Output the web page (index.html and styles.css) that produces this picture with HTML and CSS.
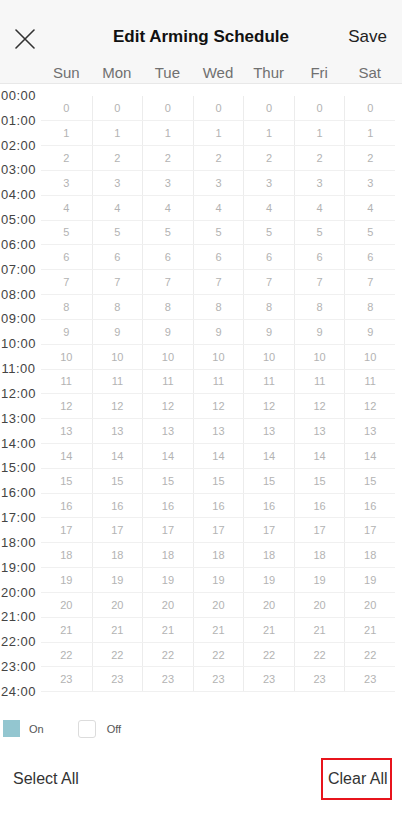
FILE: index.html
```html
<!DOCTYPE html>
<html lang="en">
<head>
<meta charset="utf-8">
<title>Edit Arming Schedule</title>
<link rel="stylesheet" href="styles.css">
</head>
<body>
<header class="header">
  <div class="titlebar">
    <div class="bar-left">
      <svg class="close-icon" width="20" height="20" viewBox="0 0 20 20"><path d="M1 1 L19 19 M19 1 L1 19" stroke="#333" stroke-width="1.6" fill="none" stroke-linecap="round"/></svg>
    </div>
    <h1 class="title">Edit Arming Schedule</h1>
    <div class="bar-right"><span class="save">Save</span></div>
  </div>
  <div class="days">
    <span>Sun</span><span>Mon</span><span>Tue</span><span>Wed</span><span>Thur</span><span>Fri</span><span>Sat</span>
  </div>
</header>
<main class="schedule">
  <div class="times">
    <span>00:00</span><span>01:00</span><span>02:00</span><span>03:00</span><span>04:00</span>
    <span>05:00</span><span>06:00</span><span>07:00</span><span>08:00</span><span>09:00</span>
    <span>10:00</span><span>11:00</span><span>12:00</span><span>13:00</span><span>14:00</span>
    <span>15:00</span><span>16:00</span><span>17:00</span><span>18:00</span><span>19:00</span>
    <span>20:00</span><span>21:00</span><span>22:00</span><span>23:00</span><span>24:00</span>
  </div>
  <div class="grid">
    <div class="row"><span>0</span><span>0</span><span>0</span><span>0</span><span>0</span><span>0</span><span>0</span></div>
    <div class="row"><span>1</span><span>1</span><span>1</span><span>1</span><span>1</span><span>1</span><span>1</span></div>
    <div class="row"><span>2</span><span>2</span><span>2</span><span>2</span><span>2</span><span>2</span><span>2</span></div>
    <div class="row"><span>3</span><span>3</span><span>3</span><span>3</span><span>3</span><span>3</span><span>3</span></div>
    <div class="row"><span>4</span><span>4</span><span>4</span><span>4</span><span>4</span><span>4</span><span>4</span></div>
    <div class="row"><span>5</span><span>5</span><span>5</span><span>5</span><span>5</span><span>5</span><span>5</span></div>
    <div class="row"><span>6</span><span>6</span><span>6</span><span>6</span><span>6</span><span>6</span><span>6</span></div>
    <div class="row"><span>7</span><span>7</span><span>7</span><span>7</span><span>7</span><span>7</span><span>7</span></div>
    <div class="row"><span>8</span><span>8</span><span>8</span><span>8</span><span>8</span><span>8</span><span>8</span></div>
    <div class="row"><span>9</span><span>9</span><span>9</span><span>9</span><span>9</span><span>9</span><span>9</span></div>
    <div class="row"><span>10</span><span>10</span><span>10</span><span>10</span><span>10</span><span>10</span><span>10</span></div>
    <div class="row"><span>11</span><span>11</span><span>11</span><span>11</span><span>11</span><span>11</span><span>11</span></div>
    <div class="row"><span>12</span><span>12</span><span>12</span><span>12</span><span>12</span><span>12</span><span>12</span></div>
    <div class="row"><span>13</span><span>13</span><span>13</span><span>13</span><span>13</span><span>13</span><span>13</span></div>
    <div class="row"><span>14</span><span>14</span><span>14</span><span>14</span><span>14</span><span>14</span><span>14</span></div>
    <div class="row"><span>15</span><span>15</span><span>15</span><span>15</span><span>15</span><span>15</span><span>15</span></div>
    <div class="row"><span>16</span><span>16</span><span>16</span><span>16</span><span>16</span><span>16</span><span>16</span></div>
    <div class="row"><span>17</span><span>17</span><span>17</span><span>17</span><span>17</span><span>17</span><span>17</span></div>
    <div class="row"><span>18</span><span>18</span><span>18</span><span>18</span><span>18</span><span>18</span><span>18</span></div>
    <div class="row"><span>19</span><span>19</span><span>19</span><span>19</span><span>19</span><span>19</span><span>19</span></div>
    <div class="row"><span>20</span><span>20</span><span>20</span><span>20</span><span>20</span><span>20</span><span>20</span></div>
    <div class="row"><span>21</span><span>21</span><span>21</span><span>21</span><span>21</span><span>21</span><span>21</span></div>
    <div class="row"><span>22</span><span>22</span><span>22</span><span>22</span><span>22</span><span>22</span><span>22</span></div>
    <div class="row"><span>23</span><span>23</span><span>23</span><span>23</span><span>23</span><span>23</span><span>23</span></div>
  </div>
</main>
<div class="legend">
  <span class="swatch swatch-on"></span><span class="legend-label">On</span>
  <span class="swatch swatch-off"></span><span class="legend-label">Off</span>
</div>
<div class="actions">
  <span class="action">Select All</span>
  <span class="action action-clear">Clear All</span>
</div>
</body>
</html>
```
FILE: styles.css
```css
* { box-sizing: border-box; }
html, body {
  margin: 0;
  padding: 0;
  background: #ffffff;
  font-family: "Liberation Sans", Arial, sans-serif;
  color: #333;
}
body { width: 402px; height: 830px; overflow: hidden; }

.header {
  background: #f7f7f7;
  border-bottom: 1px solid #e8e8e8;
  padding-top: 20px;
  height: 84px;
}
.titlebar {
  display: grid;
  grid-template-columns: 1fr auto 1fr;
  align-items: center;
  height: 34px;
}
.bar-left { padding-left: 15px; display: flex; align-items: center; }
.close-icon { display: block; margin-top: 4px; }
.title {
  margin: 0;
  font-size: 17px;
  font-weight: bold;
  color: #111;
  line-height: 34px;
}
.bar-right { display: flex; justify-content: flex-end; padding-right: 15px; }
.save { font-size: 17px; color: #222; line-height: 34px; }

.days {
  display: grid;
  grid-template-columns: repeat(7, 1fr);
  width: 395px;
  padding-left: 41px;
  padding-top: 10px;
  line-height: 18px;
  font-size: 15px;
  color: #707070;
  text-align: center;
}

.schedule {
  display: flex;
  align-items: flex-start;
}
.times {
  width: 37px;
  display: flex;
  flex-direction: column;
}
.times span {
  height: 24.83px;
  line-height: 24.83px;
  font-size: 13px;
  letter-spacing: 0.5px;
  color: #444;
  text-align: center;
}
.grid {
  margin-top: 12.4px;
  margin-left: 4px;
  width: 354px;
  display: flex;
  flex-direction: column;
}
.row {
  display: grid;
  grid-template-columns: repeat(7, 1fr);
  height: 24.83px;
  border-bottom: 1px solid #f0f0f0;
}
.row span {
  display: flex;
  align-items: center;
  justify-content: center;
  font-size: 11px;
  color: #b3b3b3;
}
.row span + span { border-left: 1px solid #ececec; }

.legend {
  display: flex;
  align-items: center;
  margin-top: 15px;
  padding-left: 3px;
  height: 18px;
}
.swatch { width: 17px; height: 17px; display: block; }
.swatch-on { background: #93c6d0; }
.swatch-off {
  width: 18px;
  height: 18px;
  border: 1px solid #dcdcdc;
  border-radius: 3px;
  background: #fff;
  margin-left: 34px;
}
.legend-label {
  font-size: 11px;
  color: #555;
  margin-left: 9px;
}
.swatch-off + .legend-label { margin-left: 11px; }

.actions {
  display: flex;
  justify-content: space-between;
  align-items: center;
  margin-top: 20px;
  padding: 0 10px 0 13px;
  height: 42px;
}
.action { font-size: 16px; color: #333; }
.action-clear {
  border: 2px solid #e8141c;
  height: 42px;
  width: 71px;
  display: flex;
  align-items: center;
  padding-left: 5px;
}
```
